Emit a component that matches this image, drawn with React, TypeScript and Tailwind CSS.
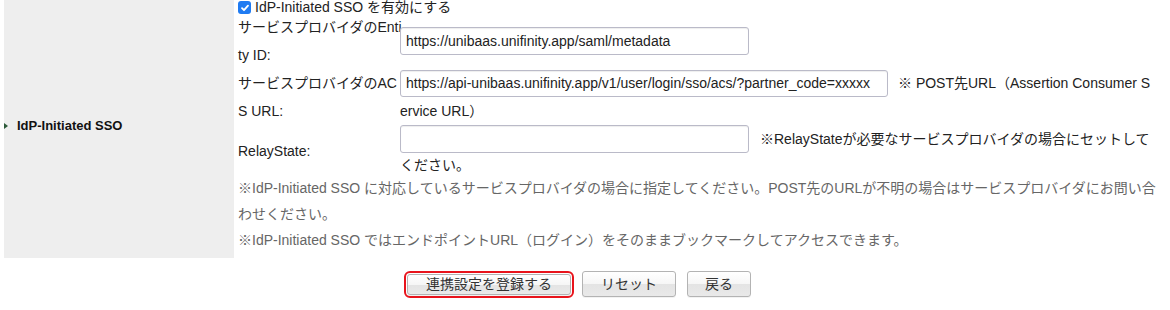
import React from 'react'

const font = "font-['Liberation_Sans','Noto_Sans_CJK_JP',sans-serif]"

function MacButton({ label, className }: { label: string; className: string }) {
  return (
    <button
      type="button"
      className={`flex items-center justify-center rounded-[3px] border border-[#b3b3b3] bg-[linear-gradient(to_bottom,#ffffff_0%,#f6f6f6_50%,#e4e4e4_52%,#e9e9e9_100%)] text-[14px] text-[#333] shadow-[0_1px_0_rgba(0,0,0,0.05)] ${className}`}
    >
      {label}
    </button>
  )
}

function TextBox({ value, className }: { value: string; className: string }) {
  return (
    <input
      readOnly
      defaultValue={value}
      className={`rounded-[3px] border border-[#babac8] bg-white px-[5px] text-[14px] text-[#222] shadow-[inset_0_1px_1px_rgba(0,0,0,0.07)] outline-none ${font} ${className}`}
    />
  )
}

export default function App() {
  return (
    <div className={`h-[310px] w-[1170px] overflow-hidden bg-white ${font}`}>
      <div className="ml-[4px] flex w-[1156px]">
        {/* header cell */}
        <div className="flex w-[230px] items-center bg-[#eeeeee] pb-[6px]">
          <span className="h-0 w-0 border-y-[3.5px] border-l-[4px] border-y-transparent border-l-[#2d5a3a]" />
          <span className="ml-[9px] text-[13px] font-bold text-[#111]">IdP-Initiated SSO</span>
        </div>

        {/* value cell */}
        <div className="flex-1 pb-[5px] pl-[4px] text-[14px] text-[#222]">
          <div className="flex h-[13px] items-start">
            <span className="mt-[1px] flex h-[13px] w-[13px] items-center justify-center rounded-[3px] bg-[#1f7bf2]">
              <svg width="10" height="10" viewBox="0 0 10 10" fill="none" stroke="white" strokeWidth="1.8" strokeLinecap="round" strokeLinejoin="round">
                <path d="M2 5.2l2 2L8 2.6" />
              </svg>
            </span>
            <span className="ml-[4px] leading-[14px]">IdP-Initiated SSO を有効にする</span>
          </div>

          <div className="grid h-[56px] grid-cols-[160px_1fr] items-center">
            <div className="leading-[28px]">
              <div className="whitespace-nowrap">サービスプロバイダのEnti</div>
              <div>ty ID:</div>
            </div>
            <div className="pl-[2px]">
              <TextBox value="https://unibaas.unifinity.app/saml/metadata" className="h-[28px] w-[349px]" />
            </div>
          </div>

          <div className="grid h-[56px] grid-cols-[160px_1fr] items-center">
            <div className="leading-[28px]">
              <div className="whitespace-nowrap">サービスプロバイダのAC</div>
              <div>S URL:</div>
            </div>
            <div className="pl-[2px]">
              <div className="flex h-[28px] items-center">
                <TextBox
                  value="https://api-unibaas.unifinity.app/v1/user/login/sso/acs/?partner_code=xxxxx"
                  className="h-[27px] w-[488px]"
                />
                <span className="ml-[10px] whitespace-nowrap">※ POST先URL（Assertion Consumer S</span>
              </div>
              <div className="leading-[28px]">ervice URL）</div>
            </div>
          </div>

          <div className="grid h-[52px] grid-cols-[160px_1fr] items-center">
            <div className="leading-[28px]">RelayState:</div>
            <div className="pl-[2px]">
              <div className="flex h-[28px] items-center">
                <TextBox value="" className="h-[28px] w-[349px]" />
                <span className="ml-[11px] whitespace-nowrap">※RelayStateが必要なサービスプロバイダの場合にセットして</span>
              </div>
              <div className="leading-[24px]">ください。</div>
            </div>
          </div>

          <div className="mt-[-2px] whitespace-nowrap leading-[26px] text-[#666]">
            <div>※IdP-Initiated SSO に対応しているサービスプロバイダの場合に指定してください。POST先のURLが不明の場合はサービスプロバイダにお問い合</div>
            <div>わせください。</div>
            <div>※IdP-Initiated SSO ではエンドポイントURL（ログイン）をそのままブックマークしてアクセスできます。</div>
          </div>
        </div>
      </div>

      {/* actions */}
      <div className="flex items-start justify-center pr-[15px] pt-[13px]">
        <div className="rounded-[6px] border-[2px] border-[#e8141c] p-[1px]">
          <MacButton label="連携設定を登録する" className="h-[21px] w-[164px]" />
        </div>
        <MacButton label="リセット" className="ml-[8px] h-[26px] w-[94px]" />
        <MacButton label="戻る" className="ml-[11px] h-[26px] w-[64px]" />
      </div>
    </div>
  )
}
